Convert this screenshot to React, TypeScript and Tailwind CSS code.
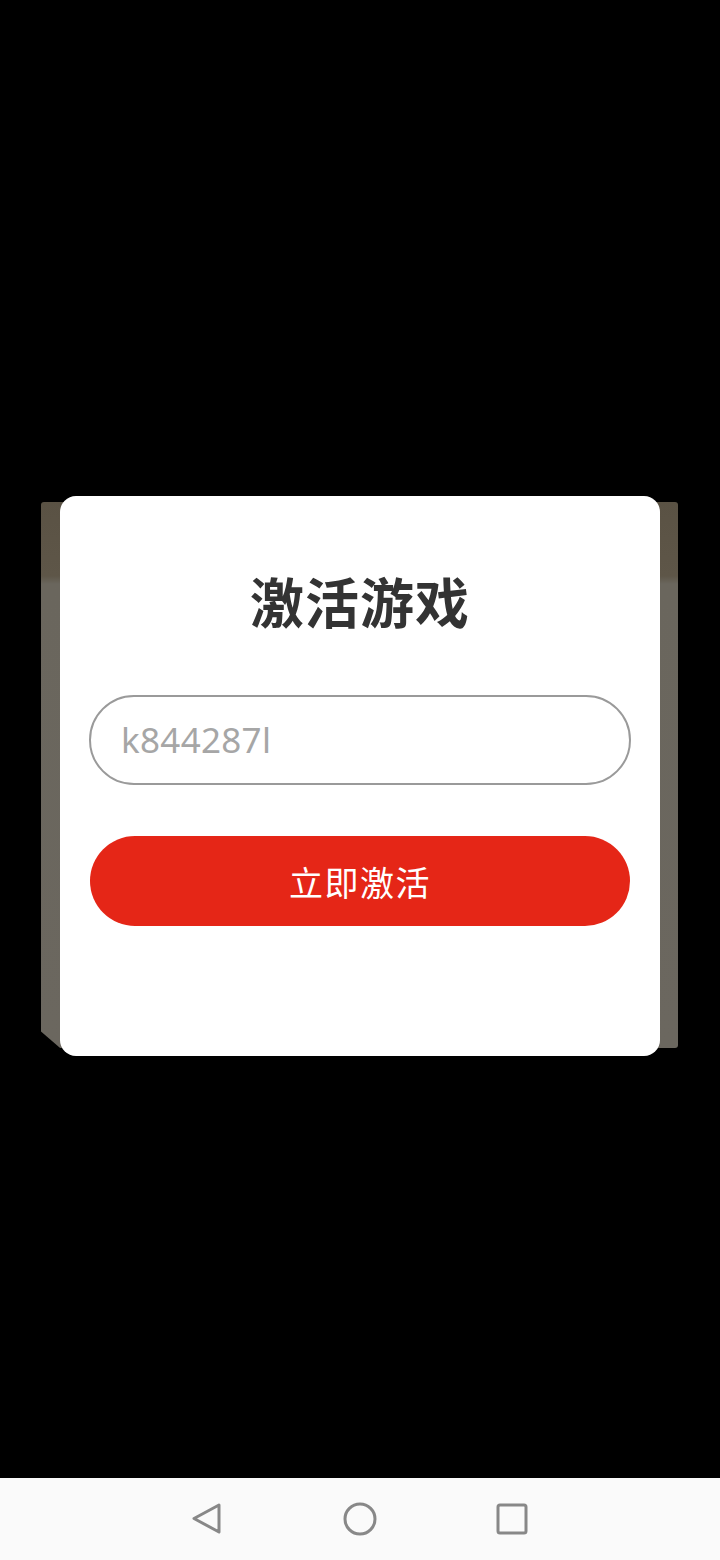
import React from "react";

export default function App() {
  return (
    <div
      className="w-[720px] h-[1560px] flex flex-col bg-black"
      style={{ fontFamily: '"Noto Sans", "Noto Sans CJK SC", sans-serif' }}
    >
      <div className="h-[1478px] bg-black pt-[496px]">
        <div className="relative w-[600px] h-[560px] mx-auto">
          <div className="absolute left-[-19px] right-[-18px] top-[6px] bottom-[8px] rounded-[3px] bg-[linear-gradient(to_bottom,#5a5244_0px,#5e5648_74px,#6a665d_82px,#6b675f_100%)] [clip-path:polygon(0_0,100%_0,100%_100%,3%_100%,0_97%)]" />
          <div className="relative h-full bg-white rounded-[16px] flex flex-col items-center">
            <h1 className="mt-[69px] h-[72px] leading-[72px] text-[54px] font-bold text-[#333333] tracking-[1px] font-['Noto_Sans_CJK_SC',sans-serif]">
              激活游戏
            </h1>
            <div className="mt-[58px] w-[542px] h-[90px] rounded-full border-2 border-[#9a9a9a] flex items-center pl-[30px]">
              <span className="text-[35px] text-[#a6a6a6] font-['Noto_Sans',sans-serif] tracking-[0.3px]">
                k844287l
              </span>
            </div>
            <button className="mt-[51px] w-[540px] h-[90px] rounded-full bg-[#e52617] flex items-center justify-center">
              <span className="text-[34px] text-white font-['Noto_Sans_CJK_SC',sans-serif] tracking-[1.5px]">
                立即激活
              </span>
            </button>
          </div>
        </div>
      </div>
      <div className="h-[82px] bg-[#fafafa] flex items-center justify-center">
        <div className="w-[152px] flex justify-center">
          <svg width="34" height="38" viewBox="0 0 34 38">
            <path
              d="M28 5 L3 18.5 L28 32 Z"
              fill="none"
              stroke="#888888"
              strokeWidth="3"
              strokeLinejoin="round"
            />
          </svg>
        </div>
        <div className="w-[152px] flex justify-center">
          <svg width="36" height="36" viewBox="0 0 36 36">
            <circle cx="18" cy="18" r="15" fill="none" stroke="#888888" strokeWidth="3" />
          </svg>
        </div>
        <div className="w-[152px] flex justify-center">
          <svg width="34" height="34" viewBox="0 0 34 34">
            <rect x="3" y="3" width="28" height="28" rx="2" fill="none" stroke="#888888" strokeWidth="3" />
          </svg>
        </div>
      </div>
    </div>
  );
}
